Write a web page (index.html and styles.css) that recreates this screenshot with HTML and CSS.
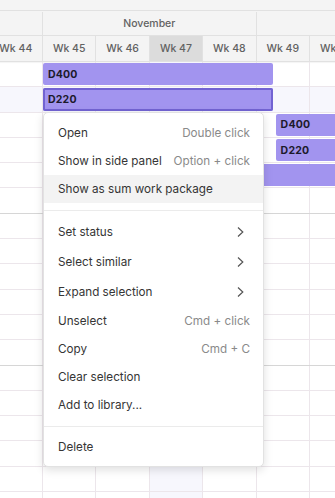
FILE: index.html
```html
<!DOCTYPE html>
<html>
<head>
    <title>Planner</title>
    <link rel="stylesheet" href="styles.css">
</head>
<body>
<div class="timeline">
    <div class="head">
        <div class="head-band"></div>
        <div class="months">
            <div class="month"></div>
            <div class="month month-full">November</div>
            <div class="month month-full"></div>
        </div>
        <div class="weeks">
            <div class="week">Wk 44</div>
            <div class="week">Wk 45</div>
            <div class="week">Wk 46</div>
            <div class="week current">Wk 47</div>
            <div class="week">Wk 48</div>
            <div class="week">Wk 49</div>
            <div class="week">Wk 50</div>
        </div>
    </div>
    <div class="grid" id="grid"></div>
</div>

<div class="menu">
    <div class="item"><span>Open</span><span class="shortcut">Double click</span></div>
    <div class="item"><span>Show in side panel</span><span class="shortcut">Option + click</span></div>
    <div class="item active"><span>Show as sum work package</span></div>
    <div class="divider"></div>
    <div class="item sub"><span>Set status</span><svg width="16" height="16" viewBox="0 0 16 16"><path d="M4 3.5 L8.8 8 L4 12.5"/></svg></div>
    <div class="item sub"><span>Select similar</span><svg width="16" height="16" viewBox="0 0 16 16"><path d="M4 3.5 L8.8 8 L4 12.5"/></svg></div>
    <div class="item sub"><span>Expand selection</span><svg width="16" height="16" viewBox="0 0 16 16"><path d="M4 3.5 L8.8 8 L4 12.5"/></svg></div>
    <div class="item"><span>Unselect</span><span class="shortcut">Cmd + click</span></div>
    <div class="item"><span>Copy</span><span class="shortcut">Cmd + C</span></div>
    <div class="item"><span>Clear selection</span></div>
    <div class="item"><span>Add to library...</span></div>
    <div class="divider"></div>
    <div class="item"><span>Delete</span></div>
</div>

<script>
    // bars per row, left/width in px from the start of Wk 44
    const bars = {
        0: [{ left: 53.4, width: 230, label: 'D400' }],
        1: [{ left: 53.4, width: 230, label: 'D220', selected: true }],
        2: [{ left: 286, width: 110, label: 'D400' }],
        3: [{ left: 286, width: 110, label: 'D220' }],
        4: [{ left: 200, width: 200, label: '' }]
    };
    const currentWeek = 3;
    const grid = document.getElementById('grid');

    for (let r = 0; r < 18; r++) {
        const row = document.createElement('div');
        row.className = 'row';
        if (r === 1) row.classList.add('selected');
        if (r === 5 || r === 11) row.classList.add('group-end');

        for (let c = 0; c < 7; c++) {
            const cell = document.createElement('div');
            cell.className = c === currentWeek ? 'cell current' : 'cell';
            row.appendChild(cell);
        }

        (bars[r] || []).forEach(function (b) {
            const bar = document.createElement('div');
            bar.className = b.selected ? 'bar selected' : 'bar';
            bar.style.left = b.left + 'px';
            bar.style.width = b.width + 'px';
            bar.textContent = b.label;
            row.appendChild(bar);
        });

        grid.appendChild(row);
    }
</script>
</body>
</html>
```

FILE: styles.css
```css
* {
    margin: 0;
    padding: 0;
    box-sizing: border-box;
}

body {
    width: 335px;
    height: 498px;
    overflow: hidden;
    position: relative;
    background: #ffffff;
    font-family: 'Inter', 'Noto Sans', sans-serif;
    color: #353535;
}

.timeline {
    margin-left: -10.4px;
    width: 380px;
}

/* header */

.head {
    background: #f4f4f4;
    color: #626262;
    font-size: 10.5px;
    font-weight: 500;
}

.head-band {
    height: 11px;
    border-bottom: 1px solid #e1e1e1;
}

.months,
.weeks {
    display: flex;
    border-bottom: 1px solid #e1e1e1;
}

.months {
    height: 25px;
    padding-top: 1px;
}

.weeks {
    height: 26px;
    box-shadow: 0 1px 1px rgba(0, 0, 0, 0.04);
}

.month {
    flex: 0 0 53.4px;
    display: flex;
    align-items: center;
    justify-content: center;
    border-right: 1px solid #e1e1e1;
}

.month-full {
    flex-basis: 213.6px;
}

.week {
    flex: 0 0 53.4px;
    display: flex;
    align-items: center;
    justify-content: center;
    border-right: 1px solid #e1e1e1;
    white-space: nowrap;
    overflow: hidden;
}

.week.current {
    background: #dcdcdc;
}

/* rows */

.row {
    position: relative;
    display: flex;
    height: 25.3px;
    border-bottom: 1px solid #ece6eb;
}

.row.selected {
    background: #f7f7fd;
}

.row.group-end {
    border-bottom-color: #d6d6d6;
}

.cell {
    flex: 0 0 53.4px;
    border-right: 1px solid #ece6eb;
}

.cell.current {
    background: #f7f7fd;
}

.bar {
    position: absolute;
    top: 1px;
    bottom: 1px;
    padding-left: 5px;
    display: flex;
    align-items: center;
    background: #a294ef;
    border-radius: 2px;
    color: #1c1a2c;
    font-size: 10.5px;
    font-weight: 700;
    letter-spacing: 0.2px;
}

.bar.selected {
    box-shadow: inset 0 0 0 2px #7263d2;
}

/* context menu */

.menu {
    position: absolute;
    left: 43px;
    top: 112px;
    width: 221px;
    padding: 6px 0 5px;
    background: #ffffff;
    border: 1px solid #e2e2e2;
    border-radius: 5px;
    box-shadow: 0 3px 10px rgba(0, 0, 0, 0.13);
    font-size: 11.7px;
}

.item {
    height: 28px;
    padding: 0 13px 0 14px;
    display: flex;
    align-items: center;
    justify-content: space-between;
    white-space: nowrap;
}

.item.sub {
    height: 30px;
}

.item.active {
    background: #f3f3f3;
}

.shortcut {
    color: #8a8a8a;
}

.item svg path {
    fill: none;
    stroke: #555;
    stroke-width: 1.2;
}

.divider {
    height: 14px;
    display: flex;
    align-items: center;
}

.divider::after {
    content: '';
    flex: 1;
    height: 1px;
    background: #ebebeb;
}
```
